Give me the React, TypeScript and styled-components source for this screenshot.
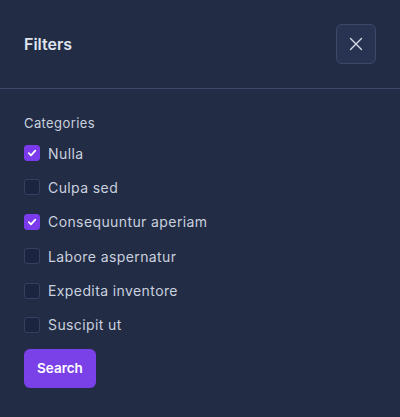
import React, { useState } from "react";
import styled, { createGlobalStyle } from "styled-components";

const Global = createGlobalStyle`
  html, body { margin: 0; padding: 0; background: #232c45; }
  body { font-family: Inter, "Noto Sans", sans-serif; -webkit-font-smoothing: antialiased; }
  * { box-sizing: border-box; }
`;

const Panel = styled.div`
  width: 400px;
  height: 417px;
  background: #232c45;
  display: flex;
  flex-direction: column;
`;

const Header = styled.div`
  display: flex;
  align-items: center;
  justify-content: space-between;
  padding: 24px 24px 24px 24px;
  border-bottom: 1px solid #3c4a6a;
`;

const Title = styled.h2`
  margin: 0;
  font-size: 16px;
  font-weight: 600;
  color: #dfe4ee;
`;

const CloseButton = styled.button`
  width: 40px;
  height: 40px;
  border-radius: 6px;
  border: 1px solid #3b4868;
  background: #283352;
  display: flex;
  align-items: center;
  justify-content: center;
  padding: 0;
  cursor: pointer;
`;

const Body = styled.div`
  padding: 24px;
  display: flex;
  flex-direction: column;
`;

const SectionLabel = styled.div`
  font-size: 13px;
  line-height: 20px;
  letter-spacing: 0.4px;
  color: #c9d1df;
  margin-bottom: 8px;
`;

const List = styled.div`
  display: flex;
  flex-direction: column;
  gap: 10.4px;
`;

const Row = styled.label`
  display: flex;
  align-items: center;
  gap: 8px;
  height: 24px;
  cursor: pointer;
  font-size: 14px;
  letter-spacing: 0.4px;
  color: #c9d1df;
`;

const Box = styled.span<{ $checked: boolean }>`
  width: 16px;
  height: 16px;
  border-radius: 3px;
  display: flex;
  align-items: center;
  justify-content: center;
  background: ${(p) => (p.$checked ? "#7c3aed" : "#1c2540")};
  border: 1px solid ${(p) => (p.$checked ? "#7c3aed" : "#344160")};
`;

const SearchButton = styled.button`
  align-self: flex-start;
  margin-top: 12px;
  height: 39px;
  padding: 0 13px;
  border: none;
  border-radius: 6px;
  background: #7b41e8;
  color: #ffffff;
  font-family: inherit;
  font-size: 13.5px;
  font-weight: 600;
  cursor: pointer;
`;

const items = [
  { label: "Nulla", checked: true },
  { label: "Culpa sed", checked: false },
  { label: "Consequuntur aperiam", checked: true },
  { label: "Labore aspernatur", checked: false },
  { label: "Expedita inventore", checked: false },
  { label: "Suscipit ut", checked: false },
];

export default function App() {
  const [state, setState] = useState(items.map((i) => i.checked));
  return (
    <Panel>
      <Global />
      <Header>
        <Title>Filters</Title>
        <CloseButton aria-label="Close">
          <svg width="14" height="14" viewBox="0 0 14 14" fill="none">
            <path d="M1.5 1.5L12.5 12.5M12.5 1.5L1.5 12.5" stroke="#d5dbe6" strokeWidth="1.4" strokeLinecap="round" />
          </svg>
        </CloseButton>
      </Header>
      <Body>
        <SectionLabel>Categories</SectionLabel>
        <List>
          {items.map((it, i) => (
            <Row key={it.label} onClick={() => setState((s) => s.map((v, j) => (j === i ? !v : v)))}>
              <Box $checked={state[i]}>
                {state[i] && (
                  <svg width="10" height="10" viewBox="0 0 10 10" fill="none">
                    <path d="M1.8 5.2L4 7.3L8.3 2.7" stroke="#fff" strokeWidth="1.8" strokeLinecap="round" strokeLinejoin="round" />
                  </svg>
                )}
              </Box>
              {it.label}
            </Row>
          ))}
        </List>
        <SearchButton>Search</SearchButton>
      </Body>
    </Panel>
  );
}
